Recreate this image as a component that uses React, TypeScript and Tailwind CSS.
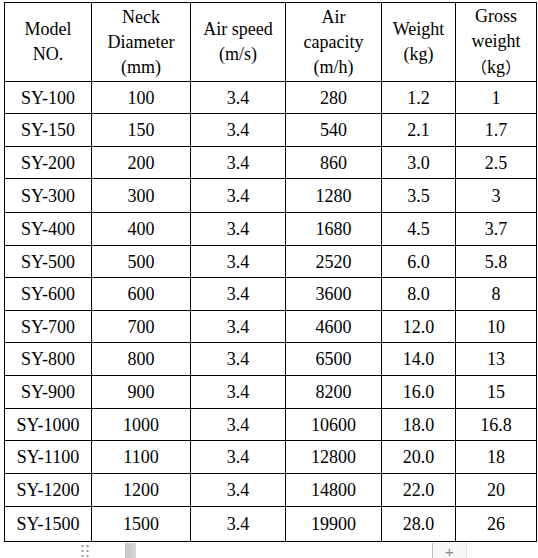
import React from "react";

const widths = [87, 99, 95, 96, 74, 81];
const heights = [32, 33, 32, 34, 33, 32, 33, 32, 33, 33, 32, 33, 33, 35];

const rows: string[][] = [
  ["SY-100", "100", "3.4", "280", "1.2", "1"],
  ["SY-150", "150", "3.4", "540", "2.1", "1.7"],
  ["SY-200", "200", "3.4", "860", "3.0", "2.5"],
  ["SY-300", "300", "3.4", "1280", "3.5", "3"],
  ["SY-400", "400", "3.4", "1680", "4.5", "3.7"],
  ["SY-500", "500", "3.4", "2520", "6.0", "5.8"],
  ["SY-600", "600", "3.4", "3600", "8.0", "8"],
  ["SY-700", "700", "3.4", "4600", "12.0", "10"],
  ["SY-800", "800", "3.4", "6500", "14.0", "13"],
  ["SY-900", "900", "3.4", "8200", "16.0", "15"],
  ["SY-1000", "1000", "3.4", "10600", "18.0", "16.8"],
  ["SY-1100", "1100", "3.4", "12800", "20.0", "18"],
  ["SY-1200", "1200", "3.4", "14800", "22.0", "20"],
  ["SY-1500", "1500", "3.4", "19900", "28.0", "26"],
];

const headers: React.ReactNode[][] = [
  ["Model", "NO."],
  ["Neck", "Diameter", "(mm)"],
  ["Air speed", "(m/s)"],
  ["Air", "capacity", "(m/h)"],
  ["Weight", "(kg)"],
  [
    "Gross",
    "weight",
    <>
      <span className="font-['Noto_Sans_CJK_SC',sans-serif] text-[16px]">（</span>
      kg
      <span className="font-['Noto_Sans_CJK_SC',sans-serif] text-[16px]">）</span>
    </>,
  ],
];

export default function App() {
  return (
    <div className="w-[538px] h-[558px] bg-white text-black overflow-hidden font-['Liberation_Serif','Times_New_Roman',serif]">
      <div className="pt-[2px] pl-[4px]">
        <div className="inline-flex flex-col border-l border-t border-black">
          <div className="flex h-[79px]">
            {headers.map((h, i) => (
              <div
                key={i}
                className="flex flex-col items-center justify-center border-r border-b border-black text-[18px] leading-[25px] text-center"
                style={{ width: widths[i] }}
              >
                {h.map((line, j) => (
                  <span key={j} className="whitespace-nowrap">
                    {line}
                  </span>
                ))}
              </div>
            ))}
          </div>
          {rows.map((r, ri) => (
            <div key={ri} className="flex" style={{ height: heights[ri] }}>
              {r.map((c, ci) => (
                <div
                  key={ci}
                  className="flex items-center justify-center border-r border-b border-black text-[18px] leading-none whitespace-nowrap"
                  style={{ width: widths[ci] }}
                >
                  {c}
                </div>
              ))}
            </div>
          ))}
        </div>
      </div>
      <div className="flex items-start h-[17px]">
        <div className="ml-[81px] mt-[3px]">
          <svg width="8" height="14" viewBox="0 0 8 14">
            {[1, 6, 11].map((y) =>
              [1.5, 6.5].map((x) => (
                <rect key={`${x}-${y}`} x={x - 1} y={y - 1} width="2" height="2" fill="#9a9a9a" />
              ))
            )}
          </svg>
        </div>
        <div className="ml-[36px] mt-[1px] w-[11px] h-[16px] bg-gradient-to-r from-[#c4c4c4] to-[#d8d8d8]" />
        <div className="ml-[296px] mt-[1px] w-[35px] h-[16px] border-l border-[#bcbcbc] border-r border-r-[#e0e0e0] bg-[#f7f7f7] flex items-center justify-center text-[#8a8a8a] text-[15px] leading-none font-['Liberation_Sans',sans-serif]">
          +
        </div>
      </div>
    </div>
  );
}
